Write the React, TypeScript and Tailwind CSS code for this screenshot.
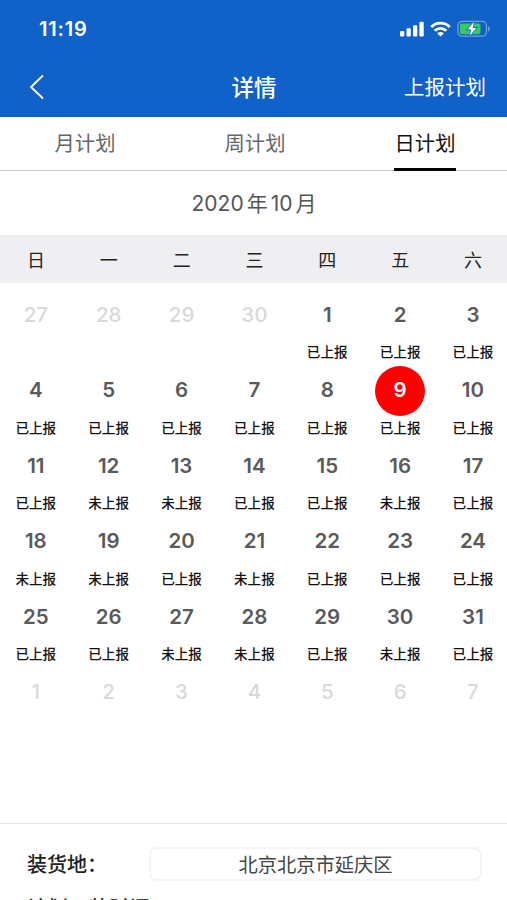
const weekdays = ['日', '一', '二', '三', '四', '五', '六'];

const tabs = [
  { label: '月计划', active: false },
  { label: '周计划', active: false },
  { label: '日计划', active: true },
];

const unreported = [12, 13, 16, 18, 19, 21, 27, 28, 30];

type Day = { day: number; outside: boolean };

const days: Day[] = [
  ...[27, 28, 29, 30].map((day) => ({ day, outside: true })),
  ...Array.from({ length: 31 }, (_, i) => ({ day: i + 1, outside: false })),
  ...[1, 2, 3, 4, 5, 6, 7].map((day) => ({ day, outside: true })),
];

function StatusIcons() {
  return (
    <div className="flex items-center">
      <svg className="h-[16px] w-[24px]" viewBox="0 0 24 16" fill="#fff">
        <rect x="0" y="10" width="4.3" height="5.5" rx="1.2" />
        <rect x="6.5" y="7.3" width="4.3" height="8.2" rx="1.2" />
        <rect x="13" y="4.3" width="4.3" height="11.2" rx="1.2" />
        <rect x="19.4" y="0.8" width="4.3" height="14.7" rx="1.2" />
      </svg>
      <svg className="ml-[6px] h-[16px] w-[21px]" viewBox="0 0 21 16" fill="none" stroke="#fff" strokeWidth="2.9">
        <path d="M1.2 6 A13.2 13.2 0 0 1 19.8 6" />
        <path d="M4.7 9.8 A8.2 8.2 0 0 1 16.3 9.8" />
        <path d="M10.5 15.6 L7.3 12.4 A4.6 4.6 0 0 1 13.7 12.4 Z" fill="#fff" stroke="none" />
      </svg>
      <svg className="ml-[6px] h-[18px] w-[34px]" viewBox="0 0 34 18">
        <rect x="0.9" y="1.4" width="28.6" height="14.8" rx="4.2" fill="none" stroke="#6f9fe0" strokeWidth="1.3" />
        <path d="M31 6.2 C33.4 7 33.4 10.6 31 11.4 Z" fill="#6f9fe0" />
        <rect x="2.9" y="3.4" width="20.6" height="10.8" rx="2.2" fill="#35ca5c" />
        <path
          d="M17 1.8 L10.6 9.6 H14.2 L12.8 15.8 L19.4 7.9 H15.8 Z"
          fill="#fff"
          stroke="#1061c8"
          strokeWidth="1.6"
          paintOrder="stroke"
        />
      </svg>
    </div>
  );
}

function DayCell({ day, outside }: Day) {
  const selected = !outside && day === 9;
  return (
    <div className="flex h-[75.4px] flex-col items-center">
      <div
        className={`flex h-[50px] w-[50px] items-center justify-center rounded-full text-[20.5px] ${
          outside ? 'font-medium text-[#d9d9d9]' : selected ? 'bg-[#fe0000] font-semibold text-white' : 'font-semibold text-[#5a5a5a]'
        }`}
      >
        {day}
      </div>
      {!outside && (
        <span className="mt-[2px] text-[13.6px] leading-[20px] font-medium whitespace-nowrap text-[#111]">
          {unreported.includes(day) ? '未上报' : '已上报'}
        </span>
      )}
    </div>
  );
}

export default function App() {
  return (
    <div className="h-[900px] w-[507px] overflow-hidden bg-white font-['Inter','Noto_Sans_CJK_SC',sans-serif]">
      <header className="h-[117px] bg-[#1061c8] text-white">
        <div className="flex h-[58px] items-center justify-between pr-[16px] pl-[39px]">
          <span className="text-[20px] font-semibold tracking-[0.8px]">11:19</span>
          <StatusIcons />
        </div>
        <div className="grid h-[58px] grid-cols-3 items-center">
          <svg className="ml-[29px] h-[26px] w-[16px]" viewBox="0 0 16 26" fill="none" stroke="#fff" strokeWidth="1.8">
            <path d="M14 1.5 L2 13 L14 24.5" />
          </svg>
          <h1 className="pt-[2px] pl-px text-center text-[22.5px] font-medium">详情</h1>
          <span className="pt-[3px] pr-[21px] text-right text-[20.5px]">上报计划</span>
        </div>
      </header>

      <nav className="grid h-[54px] w-[510px] grid-cols-3 border-b-[1.5px] border-[#c9c9c9]">
        {tabs.map((tab) => (
          <div key={tab.label} className="flex h-[54px] justify-center">
            <span
              className={`flex h-full items-center border-b-[3px] px-[1px] pt-[3px] text-[20.3px] ${
                tab.active ? 'border-black text-[#111]' : 'border-transparent text-[#666]'
              }`}
            >
              {tab.label}
            </span>
          </div>
        ))}
      </nav>

      <div className="flex h-[64px] items-center justify-center gap-[3px] pt-[2px] pl-px text-[21px] text-[#555]">
        <span>2020</span>
        <span>年</span>
        <span>10</span>
        <span>月</span>
      </div>

      <div className="h-[48px] bg-[#efeff1]">
        <div className="-ml-[0.5px] grid h-full w-[510px] grid-cols-7 items-center pt-[2px] text-center text-[18px] text-[#222]">
          {weekdays.map((name) => (
            <span key={name}>{name}</span>
          ))}
        </div>
      </div>

      <div className="-ml-[0.6px] grid h-[540px] w-[510px] grid-cols-7 content-start pt-[7.4px]">
        {days.map((item, i) => (
          <DayCell key={i} {...item} />
        ))}
      </div>

      <section className="border-t border-[#e6e6e6] px-[25px] pt-[23px]">
        <div className="flex h-[34px] items-center text-[20px]">
          <span className="w-[124px] pt-[2px] pl-[2px] font-medium text-[#222]">装货地：</span>
          <div className="flex h-[34px] flex-1 items-center justify-center rounded-[8px] border-2 border-[#f5f5f5] pt-[2px] text-[19.3px] text-[#444]">
            北京北京市延庆区
          </div>
        </div>
        <div className="mt-[13px] pl-[2px] text-[20.5px] leading-[30px] font-medium text-[#222]">计划可装时间</div>
      </section>
    </div>
  );
}
